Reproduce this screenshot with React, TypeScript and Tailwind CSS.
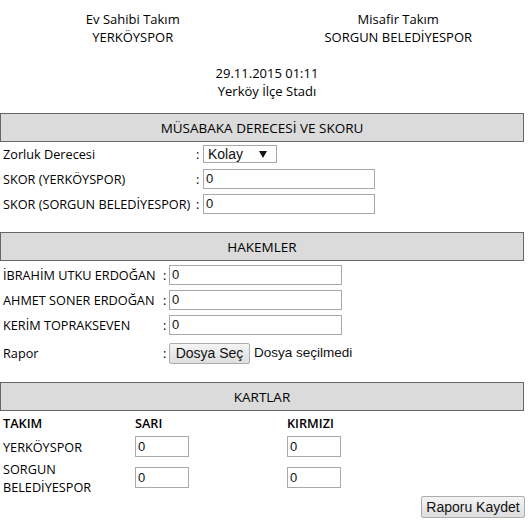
import React from "react";

function TextBox({ w, h = 20 }: { w: number; h?: number }) {
  return (
    <div
      className="flex items-center border border-[#a9a9a9] bg-white pl-[2px] font-['Liberation_Sans',sans-serif] text-[13px] text-[#111]"
      style={{ width: w, height: h }}
    >
      0
    </div>
  );
}

function SectionHeader({ title }: { title: string }) {
  return (
    <div className="flex h-[29px] w-[524px] items-center justify-center border border-[#666] bg-[#dbdbdb] text-[13.5px] font-medium text-black">
      {title}
    </div>
  );
}

function FileButton({ label, w, h }: { label: string; w: number; h: number }) {
  return (
    <div
      className="flex items-center justify-center rounded-[2px] border border-[#adadad] bg-gradient-to-b from-[#f4f4f4] to-[#dedede] font-['Liberation_Sans',sans-serif] text-[14px] text-[#111]"
      style={{ width: w, height: h }}
    >
      {label}
    </div>
  );
}

export default function App() {
  const scoreRows = [
    { label: "SKOR (YERKÖYSPOR)" },
    { label: "SKOR (SORGUN BELEDİYESPOR)" },
  ];
  const referees = ["İBRAHİM UTKU ERDOĞAN", "AHMET SONER ERDOĞAN", "KERİM TOPRAKSEVEN"];

  return (
    <div className="h-[529px] w-[531px] bg-white font-['Open_Sans',sans-serif] text-[12.7px] leading-[18px] text-black">
      {/* teams */}
      <div className="flex pt-[10px] text-[13px]">
        <div className="w-[268px] text-center">
          <div>Ev Sahibi Takım</div>
          <div>YERKÖYSPOR</div>
        </div>
        <div className="w-[268px] text-center">
          <div>Misafir Takım</div>
          <div>SORGUN BELEDİYESPOR</div>
        </div>
      </div>

      <div className="mt-[18px] w-[534px] text-center text-[13px]">
        <div>29.11.2015 01:11</div>
        <div>Yerköy İlçe Stadı</div>
      </div>

      {/* score */}
      <div className="mt-[13px]">
        <SectionHeader title="MÜSABAKA DERECESİ VE SKORU" />
        <div className="flex h-[24px] items-center">
          <div className="w-[196px] pl-[3px]">Zorluk Derecesi</div>
          <span className="w-[7px]">:</span>
          <div className="flex h-[18px] w-[74px] items-center justify-between border border-[#a9a9a9] bg-white pl-[4px] pr-[9px] font-['Liberation_Sans',sans-serif] text-[14px] text-[#111]">
            <span>Kolay</span>
            <svg width="8" height="7" viewBox="0 0 8 7">
              <path d="M0 0 L8 0 L4 7 Z" fill="#111" />
            </svg>
          </div>
        </div>
        {scoreRows.map((r) => (
          <div key={r.label} className="flex h-[25px] items-center">
            <div className="w-[196px] pl-[3px] whitespace-nowrap">{r.label}</div>
            <span className="w-[7px]">:</span>
            <TextBox w={172} />
          </div>
        ))}
      </div>

      {/* referees */}
      <div className="mt-[16px]">
        <SectionHeader title="HAKEMLER" />
        <div className="h-[1px]" />
        {referees.map((name) => (
          <div key={name} className="flex h-[25px] items-center">
            <div className="w-[163px] pl-[3px] whitespace-nowrap">{name}</div>
            <span className="w-[6px]">:</span>
            <TextBox w={173} />
          </div>
        ))}
        <div className="flex h-[32px] items-center">
          <div className="w-[163px] pl-[3px]">Rapor</div>
          <span className="w-[6px]">:</span>
          <FileButton label="Dosya Seç" w={81} h={21} />
          <span className="ml-[4px] font-['Liberation_Sans',sans-serif] text-[13.5px] text-[#111]">
            Dosya seçilmedi
          </span>
        </div>
      </div>

      {/* cards */}
      <div className="mt-[13px]">
        <SectionHeader title="KARTLAR" />
        <div className="flex h-[24px] items-center font-semibold">
          <div className="w-[135px] pl-[3px]">TAKIM</div>
          <div className="w-[152px]">SARI</div>
          <div>KIRMIZI</div>
        </div>
        <div className="flex h-[23px] items-center">
          <div className="w-[135px] pl-[3px]">YERKÖYSPOR</div>
          <div className="w-[152px]">
            <TextBox w={54} h={21} />
          </div>
          <TextBox w={54} h={21} />
        </div>
        <div className="flex h-[39px] items-center">
          <div className="w-[135px] pl-[3px]">
            <div>SORGUN</div>
            <div>BELEDİYESPOR</div>
          </div>
          <div className="w-[152px]">
            <TextBox w={54} h={21} />
          </div>
          <TextBox w={54} h={21} />
        </div>
        <div className="-mt-[1px] flex w-[525px] justify-end">
          <FileButton label="Raporu Kaydet" w={104} h={22} />
        </div>
      </div>
    </div>
  );
}
